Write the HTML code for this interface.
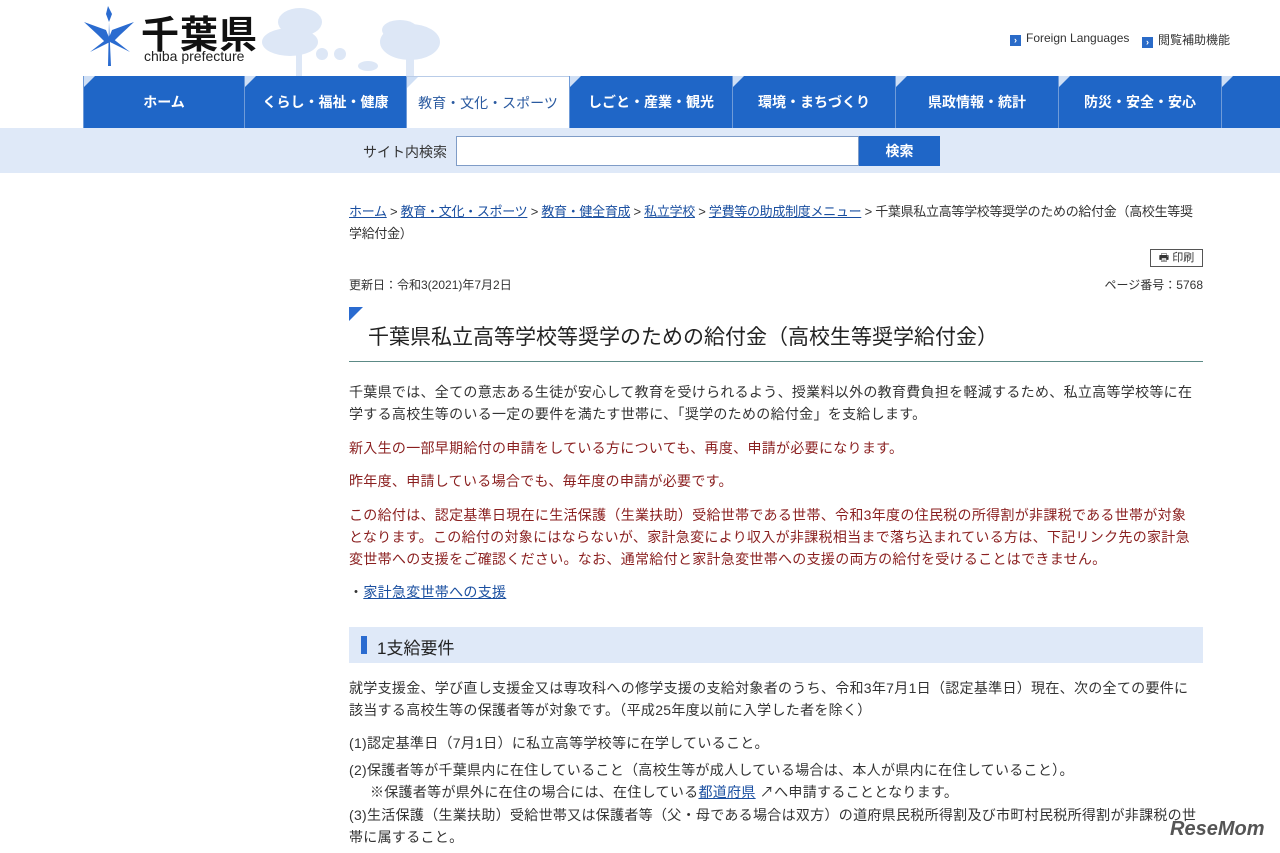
<!DOCTYPE html>
<html><head><meta charset="utf-8"><style>
*{margin:0;padding:0;box-sizing:border-box}
body{width:1280px;height:853px;overflow:hidden;background:#fff;font-family:"Liberation Sans","Noto Sans CJK JP",sans-serif;color:#333;font-size:14px}
.hdr{position:relative;height:76px}
.logo{position:absolute;left:84px;top:6px}
.logo .jp{position:absolute;left:57px;top:-2px;font-size:38px;font-weight:bold;color:#111;letter-spacing:1px;white-space:nowrap}
.logo .en{position:absolute;left:60px;top:42px;font-size:14px;color:#222;white-space:nowrap}
.tl{position:absolute;top:31px;font-size:12px;color:#333;white-space:nowrap}
.tl b{display:inline-block;width:11px;height:11px;background:#2a6bc8;color:#fff;font-size:9px;line-height:11px;text-align:center;margin-right:5px;vertical-align:-1px}
.nav{position:absolute;top:76px;left:0;width:1280px;height:52px;background:#fff}
.nav div{position:absolute;top:0;height:52px;background:#1f66c7;color:#fff;font-weight:bold;font-size:14px;text-align:center;line-height:52px;border-left:1px solid #6f9bd8}
.nav div.on{background:#fff;color:#2a5aa0;font-weight:normal;border-top:1px solid #b9cce8}
.nav div::before{content:"";position:absolute;left:0;top:0;border-top:11px solid #cfdff5;border-right:11px solid transparent}
.srch{position:absolute;top:128px;left:0;width:1280px;height:45px;background:#dfe9f8}
.srch span{position:absolute;left:363px;top:14px;font-size:14px;color:#333}
.srch .in{position:absolute;left:456px;top:8px;width:403px;height:30px;background:#fff;border:1px solid #7f9cc7}
.srch .bt{position:absolute;left:859px;top:8px;width:81px;height:30px;background:#1f66c7;color:#fff;font-weight:bold;text-align:center;line-height:30px;font-size:14px}
.c{position:absolute;left:349px;width:854px}
a{color:#1a4fa0;text-decoration:underline}
.bc{top:201px;font-size:13px;line-height:22px;color:#333;letter-spacing:-0.3px;white-space:nowrap}
.p{font-size:14px;line-height:22px;letter-spacing:0.3px;white-space:nowrap}
.red{color:#8a1f1f}
</style></head><body>
<div class="hdr">
<svg style="position:absolute;left:260px;top:2px" width="190" height="74" viewBox="0 0 190 74"><g fill="#dde7f6"><ellipse cx="40" cy="20" rx="22" ry="14"/><ellipse cx="30" cy="40" rx="28" ry="14"/><rect x="36" y="40" width="6" height="34"/><ellipse cx="150" cy="40" rx="30" ry="18"/><ellipse cx="140" cy="28" rx="18" ry="10"/><rect x="146" y="50" width="8" height="24"/><circle cx="62" cy="52" r="6"/><circle cx="80" cy="52" r="6"/><ellipse cx="108" cy="64" rx="10" ry="5"/></g></svg>
<div class="logo">
<svg width="52" height="60" viewBox="0 0 52 60"><g fill="#2a6bd0"><path d="M24 0l4 8-3 8 2 44-3 0 1-44-3-8z"/><path d="M0 16l22 8 4 10-4 3-8-8z"/><path d="M50 16l-22 8-4 10 4 3 8-8z"/><path d="M6 46l18-14 2 4z"/><path d="M46 46l-18-14-2 4z"/></g></svg>
<span class="jp">千葉県</span><span class="en">chiba prefecture</span>
</div>
<div class="tl" style="left:1010px"><b>›</b>Foreign Languages</div>
<div class="tl" style="left:1142px"><b>›</b>閲覧補助機能</div>
</div>
<div class="nav">
<div style="left:83px;width:161px">ホーム</div>
<div style="left:244px;width:162px">くらし・福祉・健康</div>
<div class="on" style="left:406px;width:163px">教育・文化・スポーツ</div>
<div style="left:569px;width:163px">しごと・産業・観光</div>
<div style="left:732px;width:163px">環境・まちづくり</div>
<div style="left:895px;width:163px">県政情報・統計</div>
<div style="left:1058px;width:163px">防災・安全・安心</div>
<div style="left:1221px;width:59px"></div>
</div>
<div class="srch"><span>サイト内検索</span><div class="in"></div><div class="bt">検索</div></div>

<div class="c bc"><a>ホーム</a> &gt; <a>教育・文化・スポーツ</a> &gt; <a>教育・健全育成</a> &gt; <a>私立学校</a> &gt; <a>学費等の助成制度メニュー</a> &gt; 千葉県私立高等学校等奨学のための給付金（高校生等奨<br>学給付金）</div>
<div style="position:absolute;left:1150px;top:249px;width:53px;height:18px;border:1px solid #555;font-size:11px;line-height:16px;text-align:center">🖶 印刷</div>
<div class="c" style="top:276px;font-size:12px">更新日：令和3(2021)年7月2日<span style="float:right">ページ番号：5768</span></div>
<div class="c" style="top:307px;height:55px;border-bottom:1px solid #5c8a86">
<div style="position:absolute;left:0;top:0;border-top:14px solid #2a6bd0;border-right:14px solid transparent"></div>
<div style="position:absolute;left:19px;top:14px;font-size:21px;color:#222">千葉県私立高等学校等奨学のための給付金（高校生等奨学給付金）</div></div>
<div class="c p" style="top:381px">千葉県では、全ての意志ある生徒が安心して教育を受けられるよう、授業料以外の教育費負担を軽減するため、私立高等学校等に在<br>学する高校生等のいる一定の要件を満たす世帯に、「奨学のための給付金」を支給します。</div>
<div class="c p red" style="top:437px">新入生の一部早期給付の申請をしている方についても、再度、申請が必要になります。</div>
<div class="c p red" style="top:470px">昨年度、申請している場合でも、毎年度の申請が必要です。</div>
<div class="c p red" style="top:504px">この給付は、認定基準日現在に生活保護（生業扶助）受給世帯である世帯、令和3年度の住民税の所得割が非課税である世帯が対象<br>となります。この給付の対象にはならないが、家計急変により収入が非課税相当まで落ち込まれている方は、下記リンク先の家計急<br>変世帯への支援をご確認ください。なお、通常給付と家計急変世帯への支援の両方の給付を受けることはできません。</div>
<div class="c p" style="top:581px">・<a>家計急変世帯への支援</a></div>
<div class="c" style="top:627px;height:36px;background:#dfe9f8"><div style="position:absolute;left:12px;top:9px;width:6px;height:18px;background:#2a6bd0"></div><div style="position:absolute;left:28px;top:7px;font-size:17px;color:#222">1支給要件</div></div>
<div class="c p" style="top:677px">就学支援金、学び直し支援金又は専攻科への修学支援の支給対象者のうち、令和3年7月1日（認定基準日）現在、次の全ての要件に<br>該当する高校生等の保護者等が対象です。（平成25年度以前に入学した者を除く）</div>
<div class="c p" style="top:732px">(1)認定基準日（7月1日）に私立高等学校等に在学していること。</div>
<div class="c p" style="top:759px">(2)保護者等が千葉県内に在住していること（高校生等が成人している場合は、本人が県内に在住していること）。<br>&nbsp;&nbsp;&nbsp;&nbsp;&nbsp;※保護者等が県外に在住の場合には、在住している<a>都道府県</a> ↗へ申請することとなります。</div>
<div class="c p" style="top:804px">(3)生活保護（生業扶助）受給世帯又は保護者等（父・母である場合は双方）の道府県民税所得割及び市町村民税所得割が非課税の世<br>帯に属すること。</div>
<div style="position:absolute;left:1170px;top:818px;font-size:20px;font-weight:bold;color:#555;font-style:italic">ReseMom</div>
</body></html>
